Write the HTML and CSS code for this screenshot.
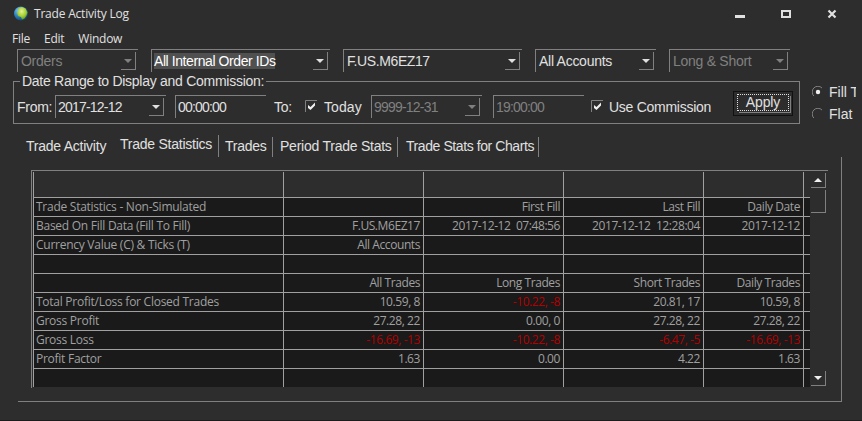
FILE: index.html
```html
<!DOCTYPE html>
<html lang="en">
<head>
  <meta charset="UTF-8" />
  <meta name="viewport" content="width=device-width, initial-scale=1.0" />
  <title>Trade Activity Log</title>
  <link rel="stylesheet" href="styles.css">
</head>
<body>
  <div class="window">
    <div class="titlebar">
      <svg class="app-icon" width="14" height="15" viewBox="0 0 14 15">
        <defs>
          <radialGradient id="sea" cx="35%" cy="30%" r="75%">
            <stop offset="0" stop-color="#8fd0f0" />
            <stop offset="0.5" stop-color="#2f86c4" />
            <stop offset="1" stop-color="#12406f" />
          </radialGradient>
          <radialGradient id="land" cx="45%" cy="35%" r="65%">
            <stop offset="0" stop-color="#e6f29a" />
            <stop offset="0.6" stop-color="#a5cf2c" />
            <stop offset="1" stop-color="#5f9a1c" />
          </radialGradient>
        </defs>
        <circle cx="7" cy="7.5" r="7" fill="url(#sea)" />
        <path d="M4.500 2 L8 1 L11.500 2.500 L13.500 6.500 L12.500 9.500 L10.500 12.500 L8 13.500 L7 11 L4 10 L3 6.500 L4.500 4.600 Z" fill="url(#land)" />
      </svg>
      <span class="title">Trade Activity Log</span>
      <div class="window-buttons">
        <svg width="10" height="10" viewBox="0 0 10 10"><rect y="6" width="10" height="3" fill="#e0e0e0" /></svg>
        <svg width="10" height="10" viewBox="0 0 10 10"><path d="M0 1h10v8H0zM2 3v4h6V3z" fill="#e0e0e0" fill-rule="evenodd" /></svg>
        <svg width="10" height="10" viewBox="0 0 10 10"><path d="M1.500 1.500L8.500 8.500M8.500 1.500L1.500 8.500" stroke="#e0e0e0" stroke-width="2.200" /></svg>
      </div>
    </div>

    <div class="menu">
      <span>File</span><span>Edit</span><span>Window</span>
    </div>

    <div class="filters">
      <div class="combo orders disabled"><span>Orders</span><i class="drop"></i></div>
      <div class="combo order-ids"><span class="highlight">All Internal Order IDs</span><i class="drop"></i></div>
      <div class="combo symbol"><span>F.US.M6EZ17</span><i class="drop"></i></div>
      <div class="combo accounts"><span>All Accounts</span><i class="drop"></i></div>
      <div class="combo direction disabled"><span>Long &amp; Short</span><i class="drop"></i></div>
    </div>

    <div class="range-row">
      <fieldset class="range">
        <legend>Date Range to Display and Commission:</legend>
        <div class="range-fields">
          <span class="from">From:</span>
          <div class="combo date"><span>2017-12-12</span><i class="drop"></i></div>
          <div class="combo time"><span>00:00:00</span></div>
          <span class="to">To:</span>
          <svg class="check" width="12" height="12" viewBox="0 0 12 12"><path d="M0.500 12V0.500H12" fill="none" stroke="#808080" /><path d="M3 5l2.500 2L10 2.500v3L5.500 10 3 8z" fill="#f0f0f0" /></svg>
          <span class="today">Today</span>
          <div class="combo date end disabled"><span>9999-12-31</span><i class="drop"></i></div>
          <div class="combo time disabled"><span>19:00:00</span></div>
          <svg class="check commission" width="12" height="12" viewBox="0 0 12 12"><path d="M0.500 12V0.500H12" fill="none" stroke="#808080" /><path d="M3 5l2.500 2L10 2.500v3L5.500 10 3 8z" fill="#f0f0f0" /></svg>
          <span class="use-commission">Use Commission</span>
          <button class="apply"><span>Apply</span></button>
        </div>
      </fieldset>
      <div class="fill-mode">
        <div class="radio">
          <svg width="12" height="12" viewBox="0 0 12 12"><path d="M1.800 10A5 5 0 0 1 10 2" fill="none" stroke="#808080" /><circle cx="6" cy="6" r="2.200" fill="#f0f0f0" /></svg>
          <span>Fill T</span>
        </div>
        <div class="radio">
          <svg width="12" height="12" viewBox="0 0 12 12"><path d="M1.800 10A5 5 0 0 1 10 2" fill="none" stroke="#808080" /></svg>
          <span>Flat</span>
        </div>
      </div>
    </div>

    <div class="tabs">
      <div class="tab activity">Trade Activity</div>
      <div class="tab statistics selected">Trade Statistics</div>
      <div class="tab trades">Trades</div>
      <div class="tab period">Period Trade Stats</div>
      <div class="tab charts">Trade Stats for Charts</div>
    </div>

    <div class="panel">
      <div class="list">
        <div class="grid" id="grid"></div>
        <div class="scrollbar">
          <div class="scroll-btn up"></div>
          <div class="thumb"></div>
          <div class="scroll-btn down"></div>
        </div>
      </div>
    </div>
  </div>

  <script>
    const rows = [
      ['', '', '', '', ''],
      ['Trade Statistics - Non-Simulated', '', 'First Fill', 'Last Fill', 'Daily Date'],
      ['Based On Fill Data (Fill To Fill)', 'F.US.M6EZ17', '2017-12-12  07:48:56', '2017-12-12  12:28:04', '2017-12-12'],
      ['Currency Value (C) & Ticks (T)', 'All Accounts', '', '', ''],
      ['', '', '', '', ''],
      ['', 'All Trades', 'Long Trades', 'Short Trades', 'Daily Trades'],
      ['Total Profit/Loss for Closed Trades', '10.59, 8', '-10.22, -8', '20.81, 17', '10.59, 8'],
      ['Gross Profit', '27.28, 22', '0.00, 0', '27.28, 22', '27.28, 22'],
      ['Gross Loss', '-16.69, -13', '-10.22, -8', '-6.47, -5', '-16.69, -13'],
      ['Profit Factor', '1.63', '0.00', '4.22', '1.63'],
      ['', '', '', '', '']
    ];

    const grid = document.getElementById('grid');
    rows.forEach((row, r) => {
      [...row, ''].forEach((text, c) => {
        const cell = document.createElement('div');
        cell.className = 'cell' + (r === 0 ? ' head' : '') + (c === 0 ? ' label' : '');
        if (text.startsWith('-')) cell.classList.add('negative');
        cell.textContent = text;
        grid.appendChild(cell);
      });
    });
  </script>
</body>
</html>
```
FILE: styles.css
```css
* {
  box-sizing: border-box;
}

body {
  margin: 0;
  background: #2d2d2d;
  color: #e0e0e0;
  font-family: "Liberation Sans", Arial, sans-serif;
  font-size: 14px;
  letter-spacing: -0.27px;
  overflow: hidden;
}

svg {
  flex: none;
}

.window {
  width: 862px;
  height: 421px;
  border-bottom: 1px solid #1c1c1c;
  overflow: hidden;
  white-space: nowrap;
}

.titlebar {
  display: flex;
  align-items: center;
  height: 27px;
  padding: 0 25px 0 14px;
}

.app-icon {
  margin-bottom: 1px;
}

.title {
  margin-left: 6px;
  font: 12px "Open Sans", sans-serif;
  letter-spacing: -0.2px;
}

.window-buttons {
  display: flex;
  gap: 36px;
  margin-left: auto;
}

.menu {
  display: flex;
  gap: 14px;
  height: 22px;
  padding-left: 12px;
  font: 12px/24px "Open Sans", sans-serif;
  letter-spacing: -0.25px;
}

.filters {
  display: flex;
  gap: 13px;
  padding-left: 17px;
}

.combo {
  display: flex;
  flex: none;
  justify-content: space-between;
  height: 23px;
  padding: 3px 2px 2px 3px;
  border-top: 1px solid #808080;
  border-left: 1px solid #808080;
  line-height: 17px;
}

.orders, .accounts, .direction {
  width: 121px;
}

.order-ids, .symbol {
  width: 179px;
}

.order-ids {
  padding-left: 2px;
}

.symbol {
  letter-spacing: -0.4px;
}

.highlight {
  height: 16px;
  background: #505050;
  color: #fff;
  letter-spacing: -0.42px;
}

.disabled {
  color: #808080;
}

.drop {
  display: flex;
  align-items: center;
  justify-content: center;
  width: 15px;
  height: 18px;
  margin-top: -1px;
  border-right: 1px solid #808080;
  border-bottom: 1px solid #808080;
}

.drop::before {
  content: "";
  border: 4px solid transparent;
  border-top-color: #e0e0e0;
  border-bottom: 0;
}

.disabled .drop::before {
  border-top-color: #808080;
}

.range-row {
  display: flex;
  height: 52px;
  padding-left: 13px;
}

.range {
  width: 787px;
  height: 50px;
  min-width: 0;
  margin: 2px 0 0;
  padding: 0 0 0 3px;
  border: 1px solid #808080;
  flex: none;
}

.range legend {
  height: 15px;
  margin-left: 3px;
  padding: 0 2px;
  line-height: 15px;
}

.range-fields {
  display: flex;
  height: 32px;
  padding-top: 6px;
  line-height: 24px;
}

.from {
  width: 38px;
}

.date {
  width: 111px;
  margin-right: 9px;
}

.end {
  margin-right: 11px;
}

.date, .time {
  padding-left: 2px;
  letter-spacing: -0.8px;
  line-height: 16px;
}

.time {
  width: 91px;
}

.to {
  width: 31px;
  margin-left: 8px;
}

.check {
  margin-top: 5px;
}

.today {
  width: 47px;
  margin-left: 7px;
  letter-spacing: 0.1px;
}

.commission {
  margin-left: 7px;
}

.use-commission {
  width: 124px;
  margin-left: 6px;
}

.apply {
  width: 60px;
  height: 25px;
  margin-top: -4px;
  padding: 2px 1px 1px 2px;
  border: 1px solid #111;
  background: #2d2d2d;
  color: #e0e0e0;
  font: inherit;
  letter-spacing: -0.1px;
}

.apply span {
  display: block;
  height: 17px;
  margin: 0 2px 3px 1px;
  border: 1px dotted #e0e0e0;
  line-height: 14px;
  box-shadow: 1px 1px 0 #2d2d2d, 2px 2px 0 #808080;
}

.fill-mode {
  width: 44px;
  margin: 9px 0 0 12px;
  overflow: hidden;
}

.radio {
  display: flex;
  align-items: center;
  gap: 5px;
  height: 22px;
  letter-spacing: 0;
}

.tabs {
  display: flex;
  align-items: flex-end;
  height: 33px;
  padding-left: 26px;
  letter-spacing: -0.24px;
}

.tab {
  height: 20px;
  margin-bottom: 0;
  padding-left: 6px;
  border-right: 1px solid #808080;
  line-height: 19px;
}

.activity {
  width: 94px;
  padding-left: 0;
  border: 0;
}

.statistics {
  width: 99px;
  height: 22px;
  padding-left: 0;
  line-height: 19px;
}

.trades {
  width: 54px;
}

.period {
  width: 125px;
  padding-left: 7px;
}

.charts {
  width: 141px;
  padding-left: 8px;
  letter-spacing: -0.42px;
}

.panel {
  width: 824px;
  height: 245px;
  margin-left: 18px;
  padding: 13px 0 0 13px;
  border-right: 1px solid #808080;
  border-bottom: 1px solid #808080;
}

.list {
  display: flex;
  width: 797px;
  height: 218px;
  padding: 1px 0 0 1px;
  border-top: 1px solid #808080;
  border-left: 1px solid #808080;
}

.grid {
  display: grid;
  grid-template-columns: 250px 140px 140px 140px 100px 6px;
  grid-template-rows: 26px;
  grid-auto-rows: 19px;
  width: 777px;
  height: 215px;
  border-left: 1px solid #a0a0a0;
  background: #1a1a1a;
  overflow: hidden;
}

.cell {
  padding-right: 3px;
  border-right: 1px solid #a0a0a0;
  border-bottom: 1px solid #a0a0a0;
  color: #a0a0a0;
  font: 12px/18px "Open Sans", sans-serif;
  letter-spacing: -0.42px;
  text-align: right;
  white-space: pre;
}

.cell:nth-child(6n) {
  border-right: 0;
}

.head {
  background: #2d2d2d;
}

.label {
  padding-left: 2px;
  letter-spacing: -0.26px;
  text-align: left;
}

.negative {
  color: #b40000;
}

.scrollbar {
  display: flex;
  flex-direction: column;
  width: 16px;
  height: 214px;
  padding-top: 1px;
}

.scroll-btn {
  display: flex;
  align-items: center;
  justify-content: center;
  height: 15px;
  margin-left: 1px;
  border-right: 1px solid #808080;
  border-bottom: 1px solid #808080;
}

.scroll-btn::before {
  content: "";
  border: 4px solid transparent;
}

.up::before {
  border-bottom-color: #f0f0f0;
  border-top: 0;
}

.down {
  margin-top: auto;
}

.down::before {
  border-top-color: #f0f0f0;
  border-bottom: 0;
}

.thumb {
  height: 23px;
  margin: 2px 0 0 1px;
  border-right: 1px solid #808080;
  border-bottom: 1px solid #808080;
}
```
